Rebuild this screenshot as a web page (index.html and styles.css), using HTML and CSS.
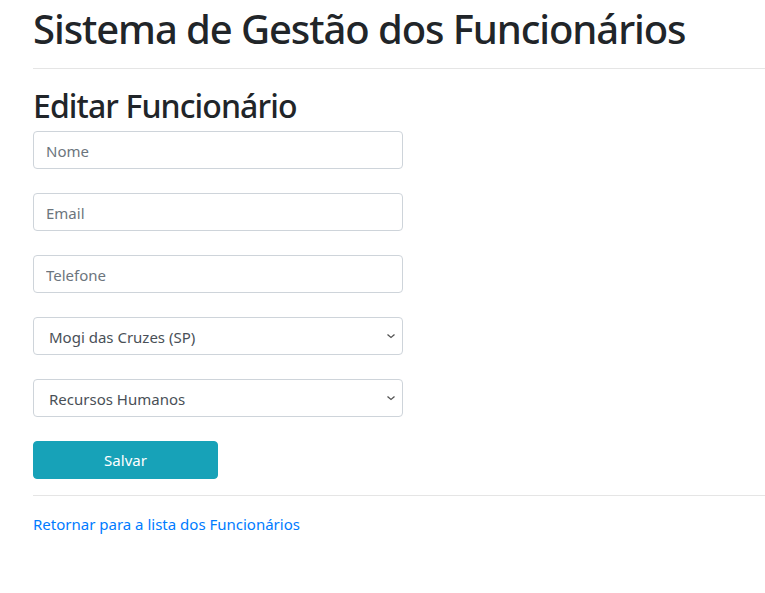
FILE: index.html
```html
<!DOCTYPE html>
<html lang="pt-BR">
<head>
<meta charset="utf-8">
<title>Editar Funcionário</title>
<link rel="stylesheet" href="styles.css">
</head>
<body>
<div class="page">
  <h1 class="title">Sistema de Gestão dos Funcionários</h1>
  <hr class="rule">
  <h2 class="subtitle">Editar Funcionário</h2>
  <form class="form">
    <div class="group"><input class="control" type="text" placeholder="Nome"></div>
    <div class="group"><input class="control" type="text" placeholder="Email"></div>
    <div class="group"><input class="control" type="text" placeholder="Telefone"></div>
    <div class="group">
      <select class="control select">
        <option>Mogi das Cruzes (SP)</option>
      </select>
    </div>
    <div class="group">
      <select class="control select">
        <option>Recursos Humanos</option>
      </select>
    </div>
    <button type="button" class="btn">Salvar</button>
  </form>
  <hr class="rule rule-bottom">
  <a class="back" href="#">Retornar para a lista dos Funcionários</a>
</div>
</body>
</html>
```
FILE: styles.css
```css
* { box-sizing: border-box; }
html, body { margin: 0; padding: 0; background: #fff; }
body {
  font-family: "Noto Sans", "Open Sans", sans-serif;
  font-size: 16px;
  color: #212529;
  line-height: 1.5;
}
.page {
  padding: 5px 0 0 33px;
}
.title {
  margin: 0;
  font-size: 40px;
  font-weight: 500;
  line-height: 48px;
  letter-spacing: -1.08px;
}
.rule {
  margin: 15px 0 0 0;
  border: 0;
  border-top: 1px solid rgba(0,0,0,0.1);
}
.subtitle {
  margin: 18px 0 6px;
  font-size: 32px;
  font-weight: 500;
  line-height: 38px;
  letter-spacing: -0.9px;
}
.form { width: 370px; }
.group { margin-bottom: 24px; }
.control {
  display: block;
  width: 100%;
  height: 38px;
  padding: 7px 12px 5px;
  font-family: inherit;
  font-size: 15px;
  color: #495057;
  background: #fff;
  border: 1px solid #ced4da;
  border-radius: 4px;
  outline: none;
}
.control::placeholder { color: #6c757d; }
.select {
  -webkit-appearance: none;
  appearance: none;
  padding-left: 15px;
  background-image: url("data:image/svg+xml,%3Csvg xmlns='http://www.w3.org/2000/svg' width='10' height='6' viewBox='0 0 10 6'%3E%3Cpath d='M1.5 1.5 L5 4.5 L8.5 1.5' fill='none' stroke='%23555' stroke-width='1.3'/%3E%3C/svg%3E");
  background-repeat: no-repeat;
  background-position: right 6px center;
  background-size: 10px 6px;
}
.btn {
  display: block;
  width: 185px;
  height: 38px;
  padding: 0;
  font-family: inherit;
  font-size: 15px;
  color: #fff;
  background: #17a2b8;
  border: 1px solid #17a2b8;
  border-radius: 4px;
  cursor: pointer;
}
.rule-bottom { margin-top: 16px; }
.back {
  display: inline-block;
  margin-top: 17px;
  font-size: 15px;
  color: #007bff;
  text-decoration: none;
}
```
